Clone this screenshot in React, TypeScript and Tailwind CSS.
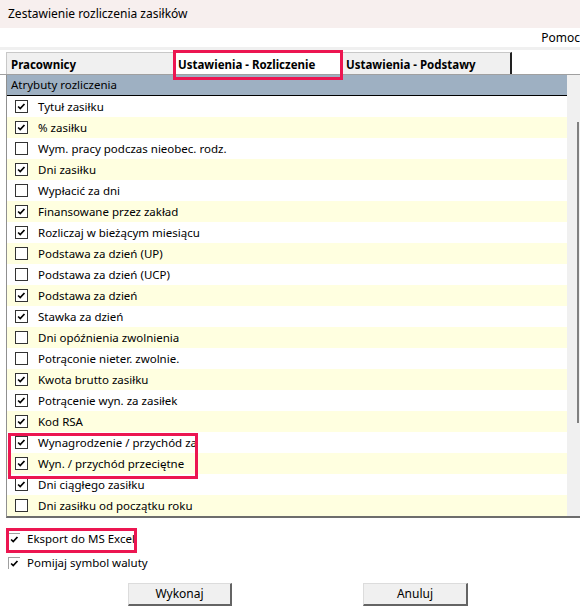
import React from 'react'

const rows: { label: string; checked: boolean }[] = [
  { label: 'Tytuł zasiłku', checked: true },
  { label: '% zasiłku', checked: true },
  { label: 'Wym. pracy podczas nieobec. rodz.', checked: false },
  { label: 'Dni zasiłku', checked: true },
  { label: 'Wypłacić za dni', checked: false },
  { label: 'Finansowane przez zakład', checked: true },
  { label: 'Rozliczaj w bieżącym miesiącu', checked: true },
  { label: 'Podstawa za dzień (UP)', checked: false },
  { label: 'Podstawa za dzień (UCP)', checked: false },
  { label: 'Podstawa za dzień', checked: true },
  { label: 'Stawka za dzień', checked: true },
  { label: 'Dni opóźnienia zwolnienia', checked: false },
  { label: 'Potrąconie nieter. zwolnie.', checked: false },
  { label: 'Kwota brutto zasiłku', checked: true },
  { label: 'Potrącenie wyn. za zasiłek', checked: true },
  { label: 'Kod RSA', checked: true },
  { label: 'Wynagrodzenie / przychód za', checked: true },
  { label: 'Wyn. / przychód przeciętne', checked: true },
  { label: 'Dni ciągłego zasiłku', checked: true },
  { label: 'Dni zasiłku od początku roku', checked: false },
]

const Tick = () => (
  <svg viewBox="0 0 13 13" className="w-full h-full">
    <path d="M2.5 6.5 L5 9 L10 3.5" fill="none" stroke="#000" strokeWidth="2" />
  </svg>
)

const GridBox = ({ checked }: { checked: boolean }) => (
  <div className="w-[13px] h-[13px] border border-[#333] bg-white shrink-0">
    {checked && <Tick />}
  </div>
)

const FlatBox = ({ checked }: { checked: boolean }) => (
  <div className="w-[12px] h-[12px] border-t border-l border-[#a0a0a0] bg-white shrink-0">
    {checked && <Tick />}
  </div>
)

const tabs = ['Pracownicy', 'Ustawienia - Rozliczenie', 'Ustawienia - Podstawy']

const App = () => {
  return (
    <div
      className="relative w-[580px] h-[610px] bg-white overflow-hidden text-[11.5px] text-black"
      style={{ fontFamily: '"Noto Sans", "Open Sans", sans-serif' }}
    >
      {/* title bar */}
      <div className="h-[28px] bg-[#f7efee] flex items-center pl-2 text-[12px]">
        Zestawienie rozliczenia zasiłków
      </div>

      {/* menu */}
      <div className="h-[19px] flex items-center justify-end">
        <span className="text-[12px]">Pomoc</span>
      </div>
      <div className="h-[3px] bg-[#f0f0f0]" />

      {/* tabs */}
      <div className="h-[25px] flex items-end pl-[6px] border-b border-[#a0a0a0]">
        {tabs.map((t, i) => (
          <div
            key={t}
            className={
              i === 1
                ? 'w-[168px] h-[24px] bg-white border-t border-dotted border-[#555] font-bold flex items-center pt-[4px] pl-[5px]'
                : i === 0
                ? 'w-[167px] h-[22px] bg-[#f0f0f0] border-t border-l border-[#c8c8c8] font-bold flex items-center pt-[3px] pl-[4px]'
                : 'w-[171px] h-[22px] bg-[#f0f0f0] border-t border-[#c8c8c8] border-r-2 border-r-[#222] font-bold flex items-center pt-[3px] pl-[5px]'
            }
          >
            {t}
          </div>
        ))}
      </div>

      {/* grid */}
      <div className="flex ml-[6px] border-l border-[#909090] border-b-2 border-b-[#6d6d6d]">
        <div className="w-[560px]">
          <div className="h-[21px] bg-[#9eb0c2] border-b border-black flex items-center pl-[4px]">
            Atrybuty rozliczenia
          </div>
          {rows.map((r, i) => (
            <div
              key={r.label}
              className={`h-[21px] flex items-center pl-[8px] gap-[10px] ${i % 2 === 1 ? 'bg-[#ffffe0]' : 'bg-white'}`}
            >
              <GridBox checked={r.checked} />
              <span className="whitespace-nowrap">{r.label}</span>
            </div>
          ))}
        </div>
        <div className="flex-1 bg-[#f0f0f0] flex justify-end pr-[1px] pt-[47px] pb-[93px]">
          <div className="w-[2px] bg-[#808080]" />
        </div>
      </div>

      {/* options */}
      <div className="pl-[8px] pt-[15px] flex flex-col gap-[12px]">
        <label className="flex items-center gap-[7px] h-[12px]">
          <FlatBox checked />
          <span>Eksport do MS Excel</span>
        </label>
        <label className="flex items-center gap-[7px] h-[12px]">
          <FlatBox checked />
          <span>Pomijaj symbol waluty</span>
        </label>
      </div>

      {/* buttons */}
      <div className="flex pl-[128px] gap-[131px] mt-[14px]">
        <button className="w-[104px] h-[23px] bg-[#f0f0f0] border border-[#dcdcdc] border-r-2 border-b-2 border-r-[#646464] border-b-[#646464] text-[12px]">
          Wykonaj
        </button>
        <button className="w-[105px] h-[23px] bg-[#f0f0f0] border border-[#dcdcdc] border-r-2 border-b-2 border-r-[#646464] border-b-[#646464] text-[12px]">
          Anuluj
        </button>
      </div>

      {/* annotation frames */}
      <div className="absolute left-[173px] top-[50px] w-[170px] h-[30px] border-[3px] border-[#ec1651]" />
      <div className="absolute left-[8px] top-[433px] w-[190px] h-[46px] border-[3px] border-[#ec1651]" />
      <div className="absolute left-[6px] top-[528px] w-[131px] h-[25px] border-[3px] border-[#ec1651]" />
    </div>
  )
}

export default App
